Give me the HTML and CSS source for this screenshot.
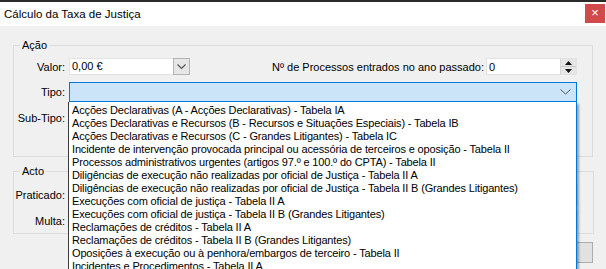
FILE: index.html
```html
<!DOCTYPE html>
<html lang="pt">
<head>
<meta charset="utf-8">
<title>Cálculo da Taxa de Justiça</title>
<link rel="stylesheet" href="styles.css">
</head>
<body>
<div class="window">
  <div class="titlebar">
    <span class="title">Cálculo da Taxa de Justiça</span>
    <span class="close">×</span>
  </div>
  <div class="client">
    <fieldset class="group group-acao">
      <legend>Ação</legend>
      <div class="row row1">
        <span class="lbl">Valor:</span>
        <div class="combo combo-valor">
          <span class="combo-text">0,00 €</span>
          <span class="ddbtn">
            <svg width="9" height="6" viewBox="0 0 9 6"><path d="M0.5 0.5 L4.5 4.5 L8.5 0.5" fill="none" stroke="#555" stroke-width="1.2"/></svg>
          </span>
        </div>
        <span class="lbl-proc">Nº de Processos entrados no ano passado:</span>
        <div class="numeric">
          <span class="num-text">0</span>
          <span class="spin">
            <span class="spin-up"><svg width="7" height="4" viewBox="0 0 7 4"><path d="M3.5 0 L7 4 L0 4 Z" fill="#111"/></svg></span>
            <span class="spin-down"><svg width="7" height="4" viewBox="0 0 7 4"><path d="M0 0 L7 0 L3.5 4 Z" fill="#111"/></svg></span>
          </span>
        </div>
      </div>
      <div class="row row2">
        <span class="lbl">Tipo:</span>
        <div class="combo combo-tipo">
          <span class="chev">
            <svg width="11" height="6" viewBox="0 0 11 6"><path d="M0.5 0.5 L5.5 5 L10.5 0.5" fill="none" stroke="#555" stroke-width="1"/></svg>
          </span>
        </div>
      </div>
      <div class="row row3">
        <span class="lbl">Sub-Tipo:</span>
        <div class="combo combo-sub"></div>
      </div>
    </fieldset>

    <fieldset class="group group-acto">
      <legend>Acto</legend>
      <div class="row row4">
        <span class="lbl">Praticado:</span>
        <div class="combo combo-sub"></div>
      </div>
      <div class="row row5">
        <span class="lbl">Multa:</span>
        <div class="combo combo-sub"></div>
      </div>
    </fieldset>

    <div class="btnrow">
      <button class="btn">Calcular</button>
    </div>

    <ul class="droplist">
      <li>Acções Declarativas (A - Acções Declarativas) - Tabela IA</li>
      <li>Acções Declarativas e Recursos (B - Recursos e Situações Especiais) - Tabela IB</li>
      <li>Acções Declarativas e Recursos (C - Grandes Litigantes) - Tabela IC</li>
      <li>Incidente de intervenção provocada principal ou acessória de terceiros e oposição - Tabela II</li>
      <li>Processos administrativos urgentes (artigos 97.º e 100.º do CPTA) - Tabela II</li>
      <li>Diligências de execução não realizadas por oficial de Justiça - Tabela II A</li>
      <li>Diligências de execução não realizadas por oficial de Justiça - Tabela II B (Grandes Litigantes)</li>
      <li>Execuções com oficial de justiça - Tabela II A</li>
      <li>Execuções com oficial de justiça - Tabela II B (Grandes Litigantes)</li>
      <li>Reclamações de créditos - Tabela II A</li>
      <li>Reclamações de créditos - Tabela II B (Grandes Litigantes)</li>
      <li>Oposições à execução ou à penhora/embargos de terceiro - Tabela II</li>
      <li>Incidentes e Procedimentos - Tabela II A</li>
    </ul>
  </div>
</div>
</body>
</html>
```

FILE: styles.css
```css
* { box-sizing: border-box; }
html, body {
  margin: 0;
  padding: 0;
  width: 606px;
  height: 269px;
  overflow: hidden;
  background: #f0f0f0;
  font-family: "Liberation Sans", Arial, sans-serif;
  font-size: 11px;
  color: #000;
}
.window {
  width: 606px;
  height: 269px;
  border-top: 2px solid #2b2b2b;
  display: flex;
  flex-direction: column;
}
.titlebar {
  height: 24px;
  background: #fff;
  display: flex;
  align-items: flex-start;
  justify-content: space-between;
}
.title {
  margin: 5px 0 0 4px;
  font-size: 11.5px;
  line-height: 14px;
}
.close {
  width: 20px;
  height: 19px;
  margin: 2px 1px 0 0;
  background: #d04a4c;
  color: #fff;
  font-size: 13px;
  line-height: 18px;
  text-align: center;
}
.client {
  position: relative;
  flex: 1;
  background: #f0f0f0;
}
.group {
  margin: 0 0 0 13px;
  width: 580px;
  border: 1px solid #dcdcdc;
  padding: 0 15px 0 0;
}
.group legend {
  margin-left: 6px;
  padding: 0 2px;
  font-size: 11px;
  line-height: 14px;
}
.group-acao {
  margin-top: 12px;
  height: 119px;
  padding-top: 6px;
}
.group-acto {
  margin-top: 7px;
  height: 70px;
  width: 581px;
  padding-top: 6px;
}
.row {
  display: flex;
  align-items: center;
}
.lbl {
  width: 51px;
  margin-right: 4px;
  text-align: right;
  white-space: nowrap;
  flex: none;
}
.row1 { height: 17px; }
.row2 { height: 20px; margin-top: 7px; }
.row3 { height: 21px; margin-top: 5px; }
.row4 { height: 21px; }
.row5 { height: 21px; margin-top: 5px; }

.combo {
  position: relative;
  height: 100%;
  background: #fff;
  border: 1px solid #e3e3e3;
}
.combo-valor {
  width: 121px;
  display: flex;
  align-items: center;
  justify-content: space-between;
}
.combo-text { padding-left: 2px; line-height: 15px; }
.ddbtn {
  width: 17px;
  height: 17px;
  margin: -1px -1px -1px 0;
  background: #e6e6e6;
  border: 1px solid #b4b4b4;
  display: flex;
  align-items: center;
  justify-content: center;
}
.lbl-proc {
  margin-left: auto;
  margin-right: 2px;
  white-space: nowrap;
}
.numeric {
  width: 91px;
  height: 17px;
  background: #fff;
  border: 1px solid #e3e3e3;
  display: flex;
  align-items: center;
  justify-content: space-between;
}
.num-text { padding-left: 2px; }
.spin {
  width: 16px;
  height: 15px;
  display: flex;
  flex-direction: column;
  background: #e6e6e6;
  border-left: 1px solid #d6d6d6;
}
.spin-up, .spin-down {
  flex: 1;
  display: flex;
  align-items: center;
  justify-content: center;
}
.spin-up { border-bottom: 1px solid #c8c8c8; }
.combo-tipo {
  flex: 1;
  background: #cce4f7;
  border-color: #0078d7;
  display: flex;
  align-items: center;
  justify-content: flex-end;
}
.chev { margin-right: 5px; display: flex; }
.combo-sub { flex: 1; }

.btnrow {
  display: flex;
  justify-content: flex-end;
  padding-right: 13px;
  margin-top: 8px;
}
.btn {
  width: 100px;
  height: 21px;
  background: #e1e1e1;
  border: 1px solid #adadad;
  font: inherit;
  padding: 0;
}

.droplist {
  position: absolute;
  left: 68px;
  top: 76px;
  width: 509px;
  height: 167px;
  margin: 0;
  padding: 2px 0 0 3px;
  list-style: none;
  background: #fff;
  border-left: 1px solid #3a3a3a;
  border-right: 1px solid #0078d7;
  box-shadow: 2px 2px 2px rgba(0,0,0,0.35);
  font-size: 11px;
  line-height: 13px;
  letter-spacing: -0.15px;
  overflow: hidden;
}
.droplist li {
  white-space: nowrap;
}
```
